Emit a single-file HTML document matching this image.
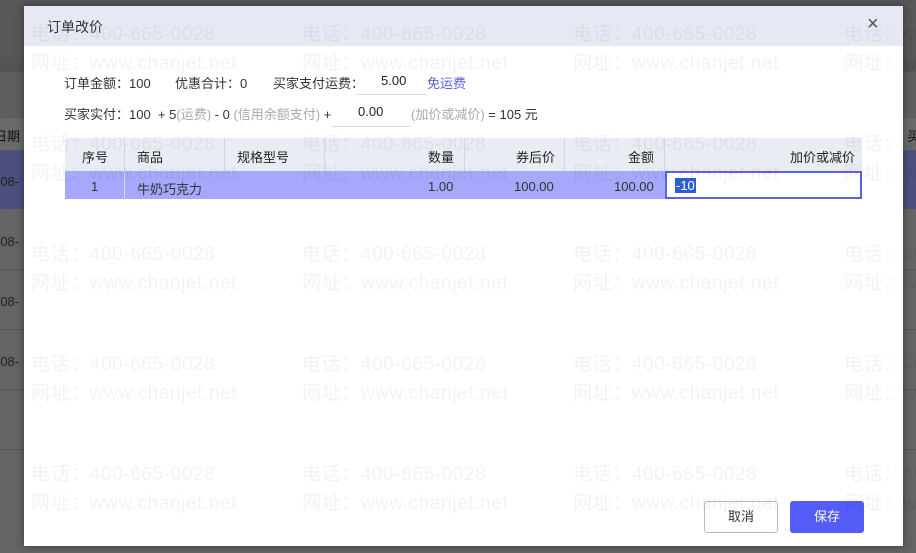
<!DOCTYPE html>
<html><head><meta charset="utf-8"><style>
*{margin:0;padding:0;box-sizing:border-box}
body{width:916px;height:553px;overflow:hidden;position:relative;background:#5e5e5e;font-family:"Liberation Sans","Noto Sans CJK SC",sans-serif;font-size:13px;color:#333}
.a{position:absolute;white-space:nowrap}
.g{color:#aaa}
.wm{position:absolute;font-size:19px;color:rgba(0,0,0,0.05);letter-spacing:0.6px;white-space:nowrap;pointer-events:none}
</style></head><body>
<div class="a" style="left:0;top:0;width:916px;height:62px;background:#575757"></div>
<div class="a" style="left:0;top:62px;width:916px;height:10px;background:#545454"></div>
<div class="a" style="left:0;top:118px;width:916px;height:32px;background:#6a6a6a"></div>
<div class="a" style="left:0;top:150px;width:916px;height:59px;background:#4d4f7e"></div>
<div class="a" style="left:0;top:209px;width:916px;height:344px;background:#646464"></div>
<div class="a" style="left:0;top:269px;width:916px;height:1px;background:#555"></div>
<div class="a" style="left:0;top:329px;width:916px;height:1px;background:#555"></div>
<div class="a" style="left:0;top:389px;width:916px;height:1px;background:#555"></div>
<div class="a" style="left:0;top:449px;width:916px;height:1px;background:#555"></div>
<div class="a" style="left:-6px;top:126px;color:#111">日期</div>
<div class="a" style="left:907px;top:126px;color:#111">买</div>
<div class="a" style="left:-4px;top:174px;color:#222">-08-</div>
<div class="a" style="left:-4px;top:234px;color:#222">-08-</div>
<div class="a" style="left:-4px;top:294px;color:#222">-08-</div>
<div class="a" style="left:-4px;top:354px;color:#222">-08-</div>
<div class="a" style="left:24px;top:6px;width:879px;height:540px;background:#fff;box-shadow:0 0 8px rgba(0,0,0,.4)">
  <div class="a" style="left:0;top:0;width:879px;height:40px;background:#e6e9f3"></div>
  <div class="a" style="left:23px;top:11px;font-size:14px;color:#333">订单改价</div>
  <div class="a" style="left:843px;top:7px;font-size:20px;color:#555">×</div>
</div>
<div class="a" style="left:64px;top:73px">订单金额：100</div>
<div class="a" style="left:175px;top:73px">优惠合计：0</div>
<div class="a" style="left:273px;top:73px">买家支付运费：</div>
<div class="a" style="left:381px;top:73px;color:#222">5.00</div>
<div class="a" style="left:356px;top:94px;width:70px;height:1px;background:#ddd"></div>
<div class="a" style="left:427px;top:73px;color:#5b5fd6">免运费</div>
<div class="a" style="left:64px;top:104px">买家实付：100&nbsp; + 5<span class="g">(运费)</span> - 0 <span class="g">(信用余额支付)</span> +</div>
<div class="a" style="left:358px;top:104px;color:#222">0.00</div>
<div class="a" style="left:331px;top:126px;width:80px;height:1px;background:#ddd"></div>
<div class="a" style="left:411px;top:104px"><span class="g">(加价或减价)</span> = 105 元</div>
<div class="a" style="left:65px;top:138px;width:797px;height:33px;background:#e9ecf3"></div>
<div class="a" style="left:65px;top:171px;width:600px;height:28px;background:#a5a8fb"></div>
<div class="a" style="left:124px;top:138px;width:1px;height:61px;background:#d3d6e0"></div>
<div class="a" style="left:224px;top:138px;width:1px;height:33px;background:#d3d6e0"></div>
<div class="a" style="left:324px;top:138px;width:1px;height:33px;background:#d3d6e0"></div>
<div class="a" style="left:464px;top:138px;width:1px;height:33px;background:#d3d6e0"></div>
<div class="a" style="left:564px;top:138px;width:1px;height:33px;background:#d3d6e0"></div>
<div class="a" style="left:664px;top:138px;width:1px;height:33px;background:#d3d6e0"></div>
<div class="a" style="left:82px;top:147px;color:#222">序号</div>
<div class="a" style="left:137px;top:147px;color:#222">商品</div>
<div class="a" style="left:237px;top:147px;color:#222">规格型号</div>
<div class="a" style="left:428px;top:147px;color:#222">数量</div>
<div class="a" style="left:516px;top:147px;color:#222">券后价</div>
<div class="a" style="left:628px;top:147px;color:#222">金额</div>
<div class="a" style="left:790px;top:147px;color:#222">加价或减价</div>
<div class="a" style="left:91px;top:179px">1</div>
<div class="a" style="left:137px;top:179px">牛奶巧克力</div>
<div class="a" style="left:428px;top:179px">1.00</div>
<div class="a" style="left:514px;top:179px">100.00</div>
<div class="a" style="left:614px;top:179px">100.00</div>
<div class="a" style="left:665px;top:171px;width:197px;height:28px;border:2px solid #5b63e6;background:#fff"></div>
<div class="a" style="left:675px;top:178px;background:#2c5fd4;color:#fff;padding:0 1px;line-height:15px">-10</div>
<div class="a" style="left:704px;top:501px;width:74px;height:32px;border:1px solid #bbb;border-radius:3px;background:#fff;text-align:center;line-height:30px;color:#333">取消</div>
<div class="a" style="left:790px;top:501px;width:74px;height:32px;border-radius:3px;background:#545cf6;text-align:center;line-height:32px;color:#fff">保存</div>
<div class="wm" style="left:31px;top:19px">电话：400-665-0028</div>
<div class="wm" style="left:302px;top:19px">电话：400-665-0028</div>
<div class="wm" style="left:573px;top:19px">电话：400-665-0028</div>
<div class="wm" style="left:844px;top:19px">电话：400-665-0028</div>
<div class="wm" style="left:31px;top:48px">网址：www.chanjet.net</div>
<div class="wm" style="left:302px;top:48px">网址：www.chanjet.net</div>
<div class="wm" style="left:573px;top:48px">网址：www.chanjet.net</div>
<div class="wm" style="left:844px;top:48px">网址：www.chanjet.net</div>
<div class="wm" style="left:31px;top:129px">电话：400-665-0028</div>
<div class="wm" style="left:302px;top:129px">电话：400-665-0028</div>
<div class="wm" style="left:573px;top:129px">电话：400-665-0028</div>
<div class="wm" style="left:844px;top:129px">电话：400-665-0028</div>
<div class="wm" style="left:31px;top:158px">网址：www.chanjet.net</div>
<div class="wm" style="left:302px;top:158px">网址：www.chanjet.net</div>
<div class="wm" style="left:573px;top:158px">网址：www.chanjet.net</div>
<div class="wm" style="left:844px;top:158px">网址：www.chanjet.net</div>
<div class="wm" style="left:31px;top:239px">电话：400-665-0028</div>
<div class="wm" style="left:302px;top:239px">电话：400-665-0028</div>
<div class="wm" style="left:573px;top:239px">电话：400-665-0028</div>
<div class="wm" style="left:844px;top:239px">电话：400-665-0028</div>
<div class="wm" style="left:31px;top:268px">网址：www.chanjet.net</div>
<div class="wm" style="left:302px;top:268px">网址：www.chanjet.net</div>
<div class="wm" style="left:573px;top:268px">网址：www.chanjet.net</div>
<div class="wm" style="left:844px;top:268px">网址：www.chanjet.net</div>
<div class="wm" style="left:31px;top:349px">电话：400-665-0028</div>
<div class="wm" style="left:302px;top:349px">电话：400-665-0028</div>
<div class="wm" style="left:573px;top:349px">电话：400-665-0028</div>
<div class="wm" style="left:844px;top:349px">电话：400-665-0028</div>
<div class="wm" style="left:31px;top:378px">网址：www.chanjet.net</div>
<div class="wm" style="left:302px;top:378px">网址：www.chanjet.net</div>
<div class="wm" style="left:573px;top:378px">网址：www.chanjet.net</div>
<div class="wm" style="left:844px;top:378px">网址：www.chanjet.net</div>
<div class="wm" style="left:31px;top:459px">电话：400-665-0028</div>
<div class="wm" style="left:302px;top:459px">电话：400-665-0028</div>
<div class="wm" style="left:573px;top:459px">电话：400-665-0028</div>
<div class="wm" style="left:844px;top:459px">电话：400-665-0028</div>
<div class="wm" style="left:31px;top:488px">网址：www.chanjet.net</div>
<div class="wm" style="left:302px;top:488px">网址：www.chanjet.net</div>
<div class="wm" style="left:573px;top:488px">网址：www.chanjet.net</div>
<div class="wm" style="left:844px;top:488px">网址：www.chanjet.net</div>
</body></html>
